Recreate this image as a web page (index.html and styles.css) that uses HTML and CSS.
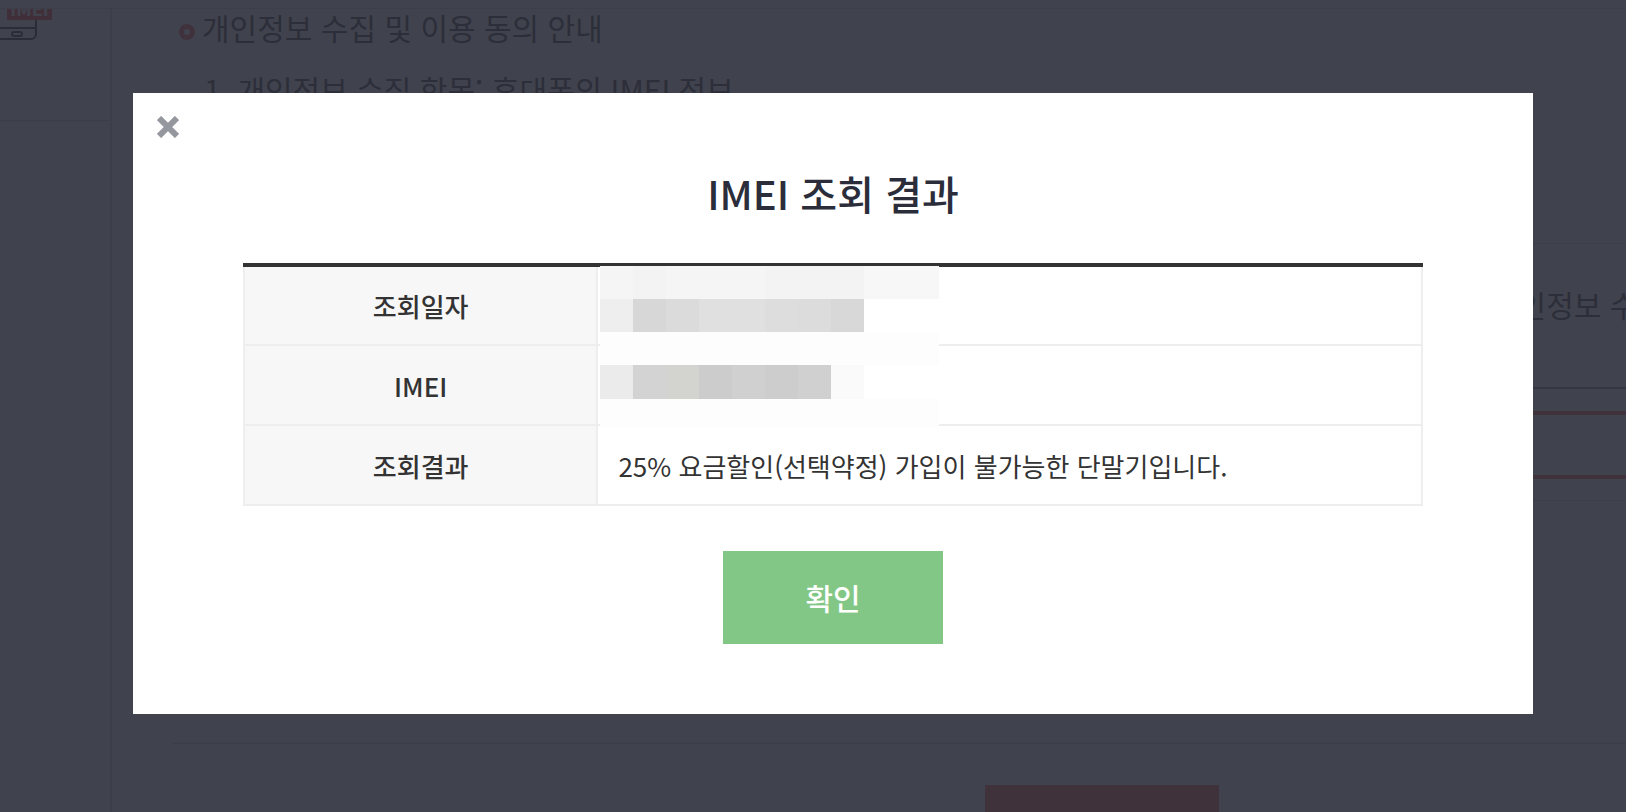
FILE: index.html
```html
<!DOCTYPE html>
<html lang="ko">
<head>
<meta charset="utf-8">
<title>IMEI 조회 결과</title>
<link rel="stylesheet" href="styles.css">
</head>
<body>
<div class="page">
  <aside class="sidebar">
    <div class="sidebar-step">
      <svg class="phone-icon" width="110" height="74" viewBox="0 0 110 74" aria-hidden="true">
        <circle class="halo" cx="24" cy="4" r="56"/>
        <path class="phone" d="M-4 0V25a5 5 0 0 0 5 5H31a5 5 0 0 0 5-5V0M-4 19H36"/>
        <rect class="phone" x="12" y="23" width="10" height="4" rx="2"/>
      </svg>
      <span class="badge">IMEI</span>
    </div>
  </aside>
  <main class="content">
    <h2 class="notice-title"><span class="ring"></span>개인정보 수집 및 이용 동의 안내</h2>
    <p class="notice-item">1. 개인정보 수집 항목: 휴대폰의 IMEI 정보</p>
    <div class="agree-row">개인정보 수집</div>
    <div class="imei-row"><div class="imei-field"></div></div>
    <div class="guide-box"></div>
    <div class="submit-row"><span class="submit"></span></div>
  </main>
</div>
<div class="overlay">
  <section class="dialog" role="dialog" aria-modal="true" aria-labelledby="dialog-title">
    <button class="close" type="button" aria-label="닫기">
      <svg width="22" height="22" viewBox="0 0 22 22" aria-hidden="true"><path d="M2 2L20 20M20 2L2 20"/></svg>
    </button>
    <h1 class="dialog-title" id="dialog-title">IMEI 조회 결과</h1>
    <div class="result">
      <table class="result-table">
        <tbody>
          <tr><th scope="row">조회일자</th><td></td></tr>
          <tr><th scope="row">IMEI</th><td></td></tr>
          <tr><th scope="row">조회결과</th><td>25% 요금할인(선택약정) 가입이 불가능한 단말기입니다.</td></tr>
        </tbody>
      </table>
      <svg class="mosaic" width="339" height="162" viewBox="0 0 339 162" shape-rendering="crispEdges" aria-hidden="true">
        <rect width="339" height="162" fill="#fdfdfd"/>
        <rect width="339" height="33" fill="#f7f7f7"/>
        <rect width="264" height="33" fill="#f5f5f5"/>
        <rect x="33" width="33" height="33" fill="#f3f3f3"/>
        <rect x="165" width="99" height="33" fill="#f3f3f3"/>
        <rect y="33" width="33" height="33" fill="#eeeeee"/>
        <rect x="33" y="33" width="33" height="33" fill="#d7d7d7"/>
        <rect x="66" y="33" width="33" height="33" fill="#dbdbdb"/>
        <rect x="99" y="33" width="66" height="33" fill="#e0e0e0"/>
        <rect x="165" y="33" width="33" height="33" fill="#dddddd"/>
        <rect x="198" y="33" width="33" height="33" fill="#dcdcdc"/>
        <rect x="231" y="33" width="33" height="33" fill="#d8d8d8"/>
        <rect x="264" y="33" width="75" height="33" fill="#ffffff"/>
        <rect y="99" width="33" height="34" fill="#ebebeb"/>
        <rect x="33" y="99" width="33" height="34" fill="#d3d3d3"/>
        <rect x="66" y="99" width="33" height="34" fill="#d3d3d0"/>
        <rect x="99" y="99" width="33" height="34" fill="#cccccc"/>
        <rect x="132" y="99" width="33" height="34" fill="#d0d0d0"/>
        <rect x="165" y="99" width="33" height="34" fill="#cdcdcd"/>
        <rect x="198" y="99" width="33" height="34" fill="#d0d0d0"/>
        <rect x="231" y="99" width="33" height="34" fill="#fafafa"/>
        <rect x="264" y="99" width="75" height="34" fill="#ffffff"/>
      </svg>
    </div>
    <button class="confirm" type="button">확인</button>
  </section>
</div>
</body>
</html>
```
FILE: styles.css
```css
* { box-sizing: border-box; }

body {
  margin: 0;
  background: #ffffff;
  color: #333333;
  font-family: "Noto Sans CJK KR", "Noto Sans", sans-serif;
}

.page {
  display: flex;
  height: 100vh;
  overflow: hidden;
  border-top: 8px solid #ffffff;
}

/* Page behind the dialog */
.sidebar {
  flex: none;
  width: 112px;
  border-top: 1px solid #d8d8d8;
  border-right: 2px solid #d8d8d8;
  background: #fff8f8;
}

.sidebar-step {
  position: relative;
  height: 112px;
  overflow: hidden;
  border-bottom: 1px solid #cccccc;
  background: #ffffff;
}

.phone-icon { display: block; }
.halo { fill: #fafafa; }
.phone { fill: none; stroke: #222222; stroke-width: 2; }

.badge {
  position: absolute;
  top: -12px;
  left: 7px;
  width: 45px;
  height: 23px;
  background: #ff4438;
  color: #ffffff;
  font-size: 18px;
  font-weight: 700;
  line-height: 22px;
  text-align: center;
}

.content {
  flex: 1;
  min-width: 0;
  border-top: 1px solid #d8d8d8;
}

.notice-title {
  display: flex;
  align-items: flex-end;
  gap: 7px;
  margin: 0;
  padding-left: 67px;
  font-size: 30px;
  font-weight: 400;
  line-height: 36px;
}

.ring {
  width: 16px;
  height: 16px;
  margin-bottom: 5px;
  border: 5px solid #ff5a50;
  border-radius: 50%;
}

.notice-item {
  margin: 26px 0 0 92px;
  font-size: 30px;
  line-height: 36px;
}

.agree-row {
  height: 146px;
  margin: 136px 0 0 60px;
  padding: 38px 0 0 1319px;
  border-top: 1px solid #d8d8d8;
  border-bottom: 2px solid #888888;
  font-size: 30px;
  line-height: 44px;
  white-space: nowrap;
}

.imei-row {
  margin-left: 60px;
  padding: 22px 0 21px;
  border-bottom: 1px solid #d8d8d8;
}

.imei-field {
  height: 68px;
  border: 4px solid #ff5a46;
  border-width: 4px 0;
}

.guide-box {
  height: 243px;
  margin-left: 60px;
  border: solid #cccccc;
  border-width: 0 0 1px;
  background: #fff8f8;
}

.submit-row {
  padding: 41px 0 0 873px;
}

.submit {
  display: block;
  width: 234px;
  height: 90px;
  background: #ff5a46;
}

/* Dialog */
.overlay {
  position: fixed;
  inset: 0;
  padding: 93px 93px 98px 133px;
  background: rgba(43, 46, 58, 0.9);
}

.dialog {
  position: relative;
  display: flex;
  flex-direction: column;
  align-items: center;
  padding: 70px 110px;
  background: #ffffff;
}

.close {
  position: absolute;
  top: 23px;
  left: 24px;
  padding: 0;
  border: 0;
  background: none;
  line-height: 0;
}

.close path { stroke: #95979f; stroke-width: 6; }

.dialog-title {
  margin: 0;
  color: #2b2e3a;
  font-size: 40px;
  font-weight: 500;
  line-height: 60px;
}

.result {
  position: relative;
  width: 100%;
  margin-top: 40px;
  border-top: 4px solid #333333;
}

.result-table {
  width: 100%;
  table-layout: fixed;
  border-spacing: 0;
  border-left: 2px solid #eeeeee;
  font-size: 26px;
  line-height: 38px;
}

.result-table th,
.result-table td {
  height: 80px;
  padding: 2px 20px 0;
  border-right: 2px solid #eeeeee;
  border-bottom: 2px solid #eeeeee;
}

.result-table tr:first-child > * {
  height: 79px;
  padding-top: 0;
}

.result-table th {
  width: 30%;
  background: #f7f7f7;
  font-weight: 500;
}

.result-table td { text-align: left; }

.mosaic {
  position: absolute;
  top: -1px;
  left: 357px;
}

.confirm {
  width: 220px;
  height: 93px;
  margin-top: 45px;
  padding: 0 0 2px;
  border: 0;
  background: #82c785;
  color: #ffffff;
  font: inherit;
  font-size: 30px;
  font-weight: 500;
}
```
